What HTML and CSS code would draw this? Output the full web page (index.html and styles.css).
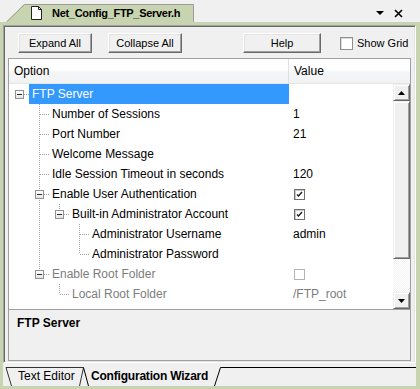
FILE: index.html
```html
<!DOCTYPE html>
<html lang="en">
<head>
    <meta charset="UTF-8">
    <title>Net_Config_FTP_Server.h</title>
    <link rel="stylesheet" href="styles.css">
</head>
<body>
    <div class="window">
        <div class="doc-bar">
            <div class="doc-tab">
                <svg class="doc-tab-shape" width="194" height="22" viewBox="0 0 194 22">
                    <polygon points="6,22 24,4 193,4 193,22" fill="#c8d4b0"/>
                    <polyline points="6.5,22 24.5,4.5 193.5,4.5 193.5,22" fill="none" stroke="#9c9c9c"/>
                </svg>
                <div class="doc-tab-label">
                    <svg width="13" height="14" viewBox="0 0 13 14">
                        <path d="M1.5,0.5 H8.5 L11.5,3.5 V13.5 H1.5 Z" fill="#fff" stroke="#222"/>
                        <path d="M8.5,0.5 V3.5 H11.5" fill="none" stroke="#222"/>
                    </svg>
                    <span>Net_Config_FTP_Server.h</span>
                </div>
            </div>
            <div class="doc-controls">
                <svg width="36" height="22" viewBox="0 0 36 22">
                    <polygon points="0,10 8,10 4,14" fill="#000"/>
                    <path d="M19,9 L26,16 M26,9 L19,16" stroke="#000" stroke-width="1.6"/>
                </svg>
            </div>
        </div>

        <div class="frame">
            <div class="panel">
                <div class="toolbar">
                    <button class="btn btn-expand">Expand All</button>
                    <button class="btn btn-collapse">Collapse All</button>
                    <button class="btn btn-help">Help</button>
                    <label class="show-grid"><span class="check-box"></span>Show Grid</label>
                </div>

                <div class="grid">
                    <div class="grid-head">
                        <div class="col-option">Option</div>
                        <div class="col-value">Value</div>
                    </div>
                    <div class="grid-body">
                        <div class="rows">
                            <div class="row selected">
                                <div class="name"><span class="ind root"><i class="box"></i></span><span class="label">FTP Server</span></div>
                                <div class="value"></div>
                            </div>
                            <div class="row">
                                <div class="name"><span class="ind"></span><span class="ind tee"></span><span class="label">Number of Sessions</span></div>
                                <div class="value">1</div>
                            </div>
                            <div class="row">
                                <div class="name"><span class="ind"></span><span class="ind tee"></span><span class="label">Port Number</span></div>
                                <div class="value">21</div>
                            </div>
                            <div class="row">
                                <div class="name"><span class="ind"></span><span class="ind tee"></span><span class="label">Welcome Message</span></div>
                                <div class="value"></div>
                            </div>
                            <div class="row">
                                <div class="name"><span class="ind"></span><span class="ind tee"></span><span class="label">Idle Session Timeout in seconds</span></div>
                                <div class="value">120</div>
                            </div>
                            <div class="row">
                                <div class="name"><span class="ind"></span><span class="ind tee"><i class="box"></i></span><span class="label">Enable User Authentication</span></div>
                                <div class="value"><span class="cb checked"><svg width="9" height="9" viewBox="0 0 9 9"><path d="M2,4.5 L3.5,6 L7,2" fill="none" stroke="#1a1a1a" stroke-width="1.4"/></svg></span></div>
                            </div>
                            <div class="row">
                                <div class="name"><span class="ind"></span><span class="ind v"></span><span class="ind elbow"><i class="box"></i></span><span class="label">Built-in Administrator Account</span></div>
                                <div class="value"><span class="cb checked"><svg width="9" height="9" viewBox="0 0 9 9"><path d="M2,4.5 L3.5,6 L7,2" fill="none" stroke="#1a1a1a" stroke-width="1.4"/></svg></span></div>
                            </div>
                            <div class="row">
                                <div class="name"><span class="ind"></span><span class="ind v"></span><span class="ind"></span><span class="ind tee"></span><span class="label">Administrator Username</span></div>
                                <div class="value">admin</div>
                            </div>
                            <div class="row">
                                <div class="name"><span class="ind"></span><span class="ind v"></span><span class="ind"></span><span class="ind elbow"></span><span class="label">Administrator Password</span></div>
                                <div class="value"></div>
                            </div>
                            <div class="row disabled">
                                <div class="name"><span class="ind"></span><span class="ind elbow"><i class="box"></i></span><span class="label">Enable Root Folder</span></div>
                                <div class="value"><span class="cb"></span></div>
                            </div>
                            <div class="row disabled">
                                <div class="name"><span class="ind"></span><span class="ind"></span><span class="ind elbow"></span><span class="label">Local Root Folder</span></div>
                                <div class="value">/FTP_root</div>
                            </div>
                        </div>
                        <div class="scrollbar">
                            <div class="sb-btn"><svg width="7" height="4" viewBox="0 0 7 4"><polygon points="0,4 7,4 3.5,0" fill="#000"/></svg></div>
                            <div class="sb-thumb"></div>
                            <div class="sb-track"></div>
                            <div class="sb-btn"><svg width="7" height="4" viewBox="0 0 7 4"><polygon points="0,0 7,0 3.5,4" fill="#000"/></svg></div>
                        </div>
                    </div>
                </div>

                <div class="description">FTP Server</div>
            </div>

            <div class="sheet-tabs">
                <svg class="sheet-tabs-shape" width="413" height="23" viewBox="0 0 413 23">
                    <path d="M3,4.5 L8.5,23 M3,4.5 H80.5 L76.5,23" fill="none" stroke="#333"/>
                    <path d="M80.5,4.5 L85.5,23 M217.5,4.5 L211.5,23 M217.5,4.5 H413" fill="none" stroke="#000"/>
                </svg>
                <div class="sheet-tab-labels">
                    <span class="sheet-tab">Text Editor</span>
                    <span class="sheet-tab active">Configuration Wizard</span>
                </div>
            </div>
        </div>
    </div>
</body>
</html>
```

FILE: styles.css
```css
* {
    margin: 0;
    padding: 0;
    box-sizing: border-box;
}

body {
    font-family: 'Liberation Sans', Arial, sans-serif;
    font-size: 12px;
    color: #000;
    background: #f0f0f0;
    overflow: hidden;
}

.window {
    width: 420px;
    height: 389px;
    background: #f0f0f0;
}

/* document tab strip */
.doc-bar {
    height: 22px;
    display: flex;
    justify-content: space-between;
}

.doc-tab {
    display: grid;
    width: 194px;
}

.doc-tab-shape,
.doc-tab-label {
    grid-area: 1 / 1;
}

.doc-tab-label {
    display: flex;
    align-items: center;
    gap: 9px;
    padding: 4px 0 0 30px;
    font-size: 11px;
    font-weight: bold;
    letter-spacing: -0.3px;
}

.doc-controls {
    padding-top: 1px;
    margin-right: 8px;
}

/* main frame */
.frame {
    height: 367px;
    border: 3px solid #c8d4b0;
    border-right-width: 4px;
}

.panel {
    border: 1px solid;
    border-color: #a0a0a0 #fff #fff #a0a0a0;
    box-shadow: inset 1px 1px 0 #696969, inset -1px -1px 0 #e3e3e3;
    padding: 1px;
}

.toolbar {
    height: 31px;
    display: flex;
    align-items: flex-start;
    padding: 6px 0 0 13px;
}

.btn {
    height: 20px;
    font-family: inherit;
    font-size: 11px;
    background: #f0f0f0;
    border: 1px solid;
    border-color: #fff #696969 #696969 #fff;
    box-shadow: inset -1px -1px 0 #a0a0a0, inset 1px 1px 0 #e3e3e3;
    color: #000;
}

.btn-expand,
.btn-collapse {
    width: 74px;
}

.btn-collapse {
    margin-left: 16px;
}

.btn-help {
    width: 78px;
    margin-left: 61px;
}

.show-grid {
    display: flex;
    align-items: center;
    gap: 4px;
    height: 20px;
    margin-left: 19px;
    font-size: 11px;
}

.check-box {
    width: 13px;
    height: 13px;
    background: #fff;
    border: 1px solid #8e8f8f;
    box-shadow: inset 1px 1px 0 #dcdcdc;
}

/* property grid */
.grid {
    height: 252px;
    margin: 0 3px;
    border: 1px solid #a0a0a0;
    background: #fff;
    display: flex;
    flex-direction: column;
}

.grid-head {
    height: 25px;
    display: flex;
    border-bottom: 1px solid #e5e5e5;
    background: linear-gradient(#fff 0%, #fff 45%, #f4f5f7 55%, #f1f2f4 100%);
    line-height: 25px;
}

.col-option {
    width: 280px;
    padding-left: 5px;
    border-right: 1px solid #e0e0e0;
}

.col-value {
    flex: 1;
    padding-left: 5px;
}

.grid-body {
    flex: 1;
    display: flex;
}

.rows {
    flex: 1;
    overflow: hidden;
}

.row {
    height: 20px;
    display: flex;
    line-height: 20px;
}

.name {
    width: 280px;
    display: flex;
}

.label {
    flex: 1;
    padding-left: 3px;
    white-space: nowrap;
}

.row.selected .label {
    background: #3399ff;
    color: #fff;
}

.row.disabled {
    color: #7d7d7d;
}

.value {
    flex: 1;
    display: flex;
    align-items: center;
    padding-left: 4px;
}

/* tree connector lines */
.ind {
    --vdots: repeating-linear-gradient(to bottom, #a0a0a0 0 1px, transparent 1px 2px);
    --hdots: repeating-linear-gradient(to right, #a0a0a0 0 1px, transparent 1px 2px);
    flex: none;
    width: 20px;
    height: 20px;
    display: flex;
    align-items: center;
    background-repeat: no-repeat;
}

.ind.v {
    background-image: var(--vdots);
    background-size: 1px 20px;
    background-position: 10px 0;
}

.ind.tee {
    background-image: var(--vdots), var(--hdots);
    background-size: 1px 20px, 9px 1px;
    background-position: 10px 0, 11px 10px;
}

.ind.elbow {
    background-image: var(--vdots), var(--hdots);
    background-size: 1px 10px, 9px 1px;
    background-position: 10px 0, 11px 10px;
}

.ind.root {
    background-image: var(--hdots);
    background-size: 9px 1px;
    background-position: 11px 10px;
}

.box {
    width: 9px;
    height: 9px;
    margin: 1px 0 0 6px;
    border: 1px solid #919191;
    background:
        linear-gradient(#2b2b2b, #2b2b2b) center / 5px 1px no-repeat,
        linear-gradient(#fff, #e4e4e4);
}

.cb {
    width: 11px;
    height: 11px;
    margin-left: 1px;
    display: flex;
    align-items: center;
    justify-content: center;
    border: 1px solid #b4b4b4;
    background: #fff;
}

.cb.checked {
    border-color: #707070;
    box-shadow: inset 1px 1px 0 #c8c8c8;
}

/* scrollbar */
.scrollbar {
    width: 17px;
    display: flex;
    flex-direction: column;
}

.sb-btn,
.sb-thumb {
    background: #f0f0f0;
    border: 1px solid;
    border-color: #f0f0f0 #696969 #696969 #f0f0f0;
    box-shadow: inset 1px 1px 0 #fff, inset -1px -1px 0 #a0a0a0;
}

.sb-btn {
    height: 17px;
    display: flex;
    align-items: center;
    justify-content: center;
}

.sb-thumb {
    height: 158px;
}

.sb-track {
    flex: 1;
    background: repeating-conic-gradient(#f3f3f3 0 25%, #fff 0 50%) 0 0 / 2px 2px;
}

/* description */
.description {
    height: 51px;
    margin: 0 3px;
    border: 1px solid #a0a0a0;
    border-top: none;
    padding: 6px 0 0 8px;
    line-height: 15px;
    font-weight: bold;
}

/* sheet tabs */
.sheet-tabs {
    display: grid;
    height: 23px;
}

.sheet-tabs-shape,
.sheet-tab-labels {
    grid-area: 1 / 1;
}

.sheet-tab-labels {
    display: flex;
    padding-top: 6px;
    line-height: 15px;
    font-size: 12px;
}

.sheet-tab {
    width: 88px;
    padding-left: 15px;
}

.sheet-tab.active {
    width: auto;
    padding-left: 0;
    font-weight: bold;
    letter-spacing: -0.2px;
}
```
